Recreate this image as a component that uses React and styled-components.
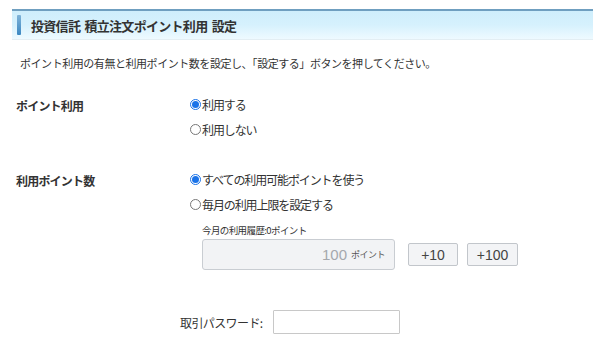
import styled, { createGlobalStyle } from 'styled-components';

const GlobalStyle = createGlobalStyle`
  body {
    margin: 0;
    background: #ffffff;
    font-family: "Noto Sans CJK JP", "Noto Sans", sans-serif;
    color: #333;
  }
`;

const Page = styled.div`
  width: 600px;
  height: 354px;
  padding: 9px 7px 0 12px;
  box-sizing: border-box;
  overflow: hidden;
`;

const Header = styled.div`
  display: flex;
  align-items: center;
  gap: 10px;
  height: 28px;
  padding-left: 5px;
  border-top: 2px solid #6f9fc0;
  background: linear-gradient(#cfeefc, #d6f1fd 50%, #eefaff);
  border-bottom: 1px solid #e3eef3;
`;

const Marker = styled.span`
  width: 4px;
  height: 20px;
  border-radius: 1px;
  background: linear-gradient(#7fb3d8, #3b88c2);
`;

const Title = styled.h1`
  margin: 0;
  font-size: 13px;
  font-weight: bold;
  color: #333;
  letter-spacing: -0.7px;
  word-spacing: 2px;
`;

const Lead = styled.p`
  margin: 15px 0 0 8px;
  font-size: 11px;
  line-height: 17px;
  color: #333;
  letter-spacing: -0.45px;
`;

const Row = styled.div`
  display: grid;
  grid-template-columns: 174px 1fr;
  margin-top: ${(p) => p.$top}px;
  padding-left: 4px;
`;

const Label = styled.div`
  font-size: 12px;
  font-weight: bold;
  line-height: 17px;
  padding-top: 1px;
  letter-spacing: -0.8px;
`;

const Options = styled.div`
  display: flex;
  flex-direction: column;
  gap: 8px;
`;

const Option = styled.label`
  display: flex;
  align-items: center;
  gap: 1px;
  font-size: 12px;
  line-height: 17px;
  color: #333;
  letter-spacing: -1.1px;
`;

const Radio = styled.span`
  width: 11px;
  height: 11px;
  border-radius: 50%;
  box-sizing: border-box;
  border: 1px solid ${(p) => (p.$on ? '#1a73e8' : '#777')};
  display: flex;
  align-items: center;
  justify-content: center;

  &::after {
    content: '';
    width: 7px;
    height: 7px;
    border-radius: 50%;
    background: ${(p) => (p.$on ? '#1a73e8' : 'transparent')};
  }
`;

const Limit = styled.div`
  padding-left: 12px;
  margin-top: 2px;
`;

const History = styled.div`
  font-size: 9.5px;
  line-height: 14px;
  color: #333;
  letter-spacing: -0.6px;
`;

const LimitRow = styled.div`
  display: flex;
  align-items: center;
  gap: 11px;
  margin-top: 2px;
`;

const PointBox = styled.div`
  width: 193px;
  height: 31px;
  box-sizing: border-box;
  border: 1px solid #c9cdd2;
  border-radius: 3px;
  background: #f2f3f5;
  display: flex;
  align-items: center;
  justify-content: flex-end;
  gap: 4px;
  padding-right: 9px;
  color: #a5a8ad;
`;

const Amount = styled.span`
  font-family: "Liberation Sans", Arial, sans-serif;
  font-size: 15px;
`;

const Unit = styled.span`
  font-size: 9px;
  color: #555;
  letter-spacing: -0.5px;
`;

const StepButton = styled.button`
  width: ${(p) => p.$w}px;
  height: 23px;
  margin-left: ${(p) => p.$ml || 0}px;
  border: 1px solid #c2c6cb;
  border-radius: 2px;
  background: #f3f4f6;
  font-family: "Liberation Sans", Arial, sans-serif;
  font-size: 14px;
  color: #444;
  padding: 0;
`;

const PasswordRow = styled.div`
  display: flex;
  align-items: center;
  gap: 10px;
  margin: 40px 0 0 168px;
`;

const PasswordLabel = styled.span`
  font-size: 12px;
  color: #333;
  letter-spacing: -0.6px;
`;

const PasswordInput = styled.input`
  width: 127px;
  height: 24px;
  box-sizing: border-box;
  border: 1px solid #c8c8c8;
  border-radius: 1px;
  background: #fff;
`;

export default function App() {
  return (
    <Page>
      <GlobalStyle />
      <Header>
        <Marker />
        <Title>投資信託 積立注文ポイント利用 設定</Title>
      </Header>
      <Lead>ポイント利用の有無と利用ポイント数を設定し、「設定する」ボタンを押してください。</Lead>

      <Row $top={24}>
        <Label>ポイント利用</Label>
        <Options>
          <Option><Radio $on />利用する</Option>
          <Option><Radio />利用しない</Option>
        </Options>
      </Row>

      <Row $top={33}>
        <Label>利用ポイント数</Label>
        <Options>
          <Option><Radio $on />すべての利用可能ポイントを使う</Option>
          <Option><Radio />毎月の利用上限を設定する</Option>
          <Limit>
            <History>今月の利用履歴:0ポイント</History>
            <LimitRow>
              <PointBox>
                <Amount>100</Amount>
                <Unit>ポイント</Unit>
              </PointBox>
              <StepButton $w={50} $ml={2}>+10</StepButton>
              <StepButton $w={51} $ml={-2}>+100</StepButton>
            </LimitRow>
          </Limit>
        </Options>
      </Row>

      <PasswordRow>
        <PasswordLabel>取引パスワード:</PasswordLabel>
        <PasswordInput type="password" />
      </PasswordRow>
    </Page>
  );
}
